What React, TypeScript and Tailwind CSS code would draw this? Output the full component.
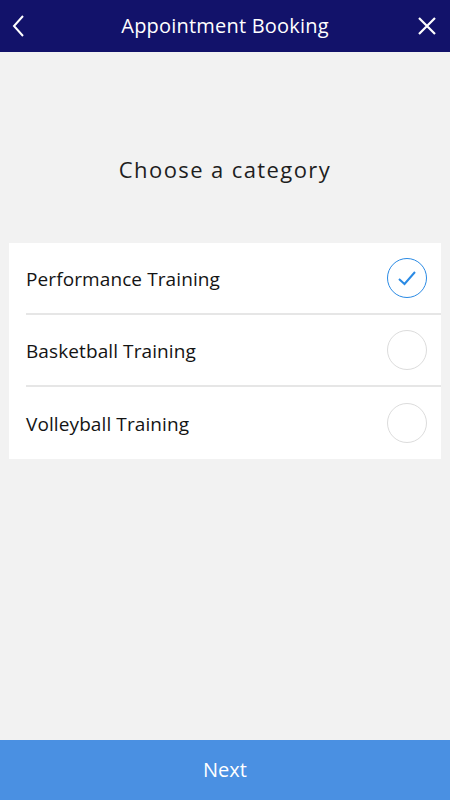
const items = [
  { label: "Performance Training", selected: true },
  { label: "Basketball Training", selected: false },
  { label: "Volleyball Training", selected: false },
];

export default function App() {
  return (
    <div className="h-[800px] w-[450px] flex flex-col bg-[#f2f2f2] font-['Open_Sans',sans-serif]">
      <div className="h-[52px] bg-[#12126a] grid grid-cols-[40px_1fr_40px] items-center text-white">
        <svg className="w-[18px] h-[26px] ml-[10px]" viewBox="0 0 18 26" fill="none" stroke="currentColor" strokeWidth={2}>
          <path d="M13 3 L4 13 L13 23" />
        </svg>
        <span className="text-center text-[20px] leading-none tracking-[0.2px]">Appointment Booking</span>
        <svg className="w-[20px] h-[20px] ml-[7px]" viewBox="0 0 20 20" fill="none" stroke="currentColor" strokeWidth={2.2}>
          <path d="M2 2 L18 18 M18 2 L2 18" />
        </svg>
      </div>

      <h1 className="pt-[102px] text-center text-[22px] leading-[30px] tracking-[1.4px] text-[#1e1e1e]">
        Choose a category
      </h1>

      <div className="mt-[59px] mx-[9px] bg-white">
        {items.map((item, i) => (
          <div key={item.label} className="pl-[17px]">
            <div
              className={
                "h-[72px] flex items-center justify-between pr-[14px] " +
                (i < items.length - 1 ? "border-b-2 border-[#e6e6e6]" : "")
              }
            >
              <span className="pt-[3px] text-[19px] text-[#141414] tracking-[0.1px]">{item.label}</span>
              {item.selected ? (
                <div className="w-[40px] h-[40px] rounded-full border-[1.5px] border-[#2a8ae4] flex items-center justify-center">
                  <svg className="w-[20px] h-[20px]" viewBox="0 0 20 20" fill="none" stroke="#2a8ae4" strokeWidth={2}>
                    <path d="M2 11 L7.5 16 L18 4" />
                  </svg>
                </div>
              ) : (
                <div className="w-[40px] h-[40px] rounded-full border-[1.5px] border-[#dcdcdc]" />
              )}
            </div>
          </div>
        ))}
      </div>

      <div className="flex-1" />

      <button className="h-[60px] w-full bg-[#4a90e2] text-white text-[20px]">Next</button>
    </div>
  );
}
